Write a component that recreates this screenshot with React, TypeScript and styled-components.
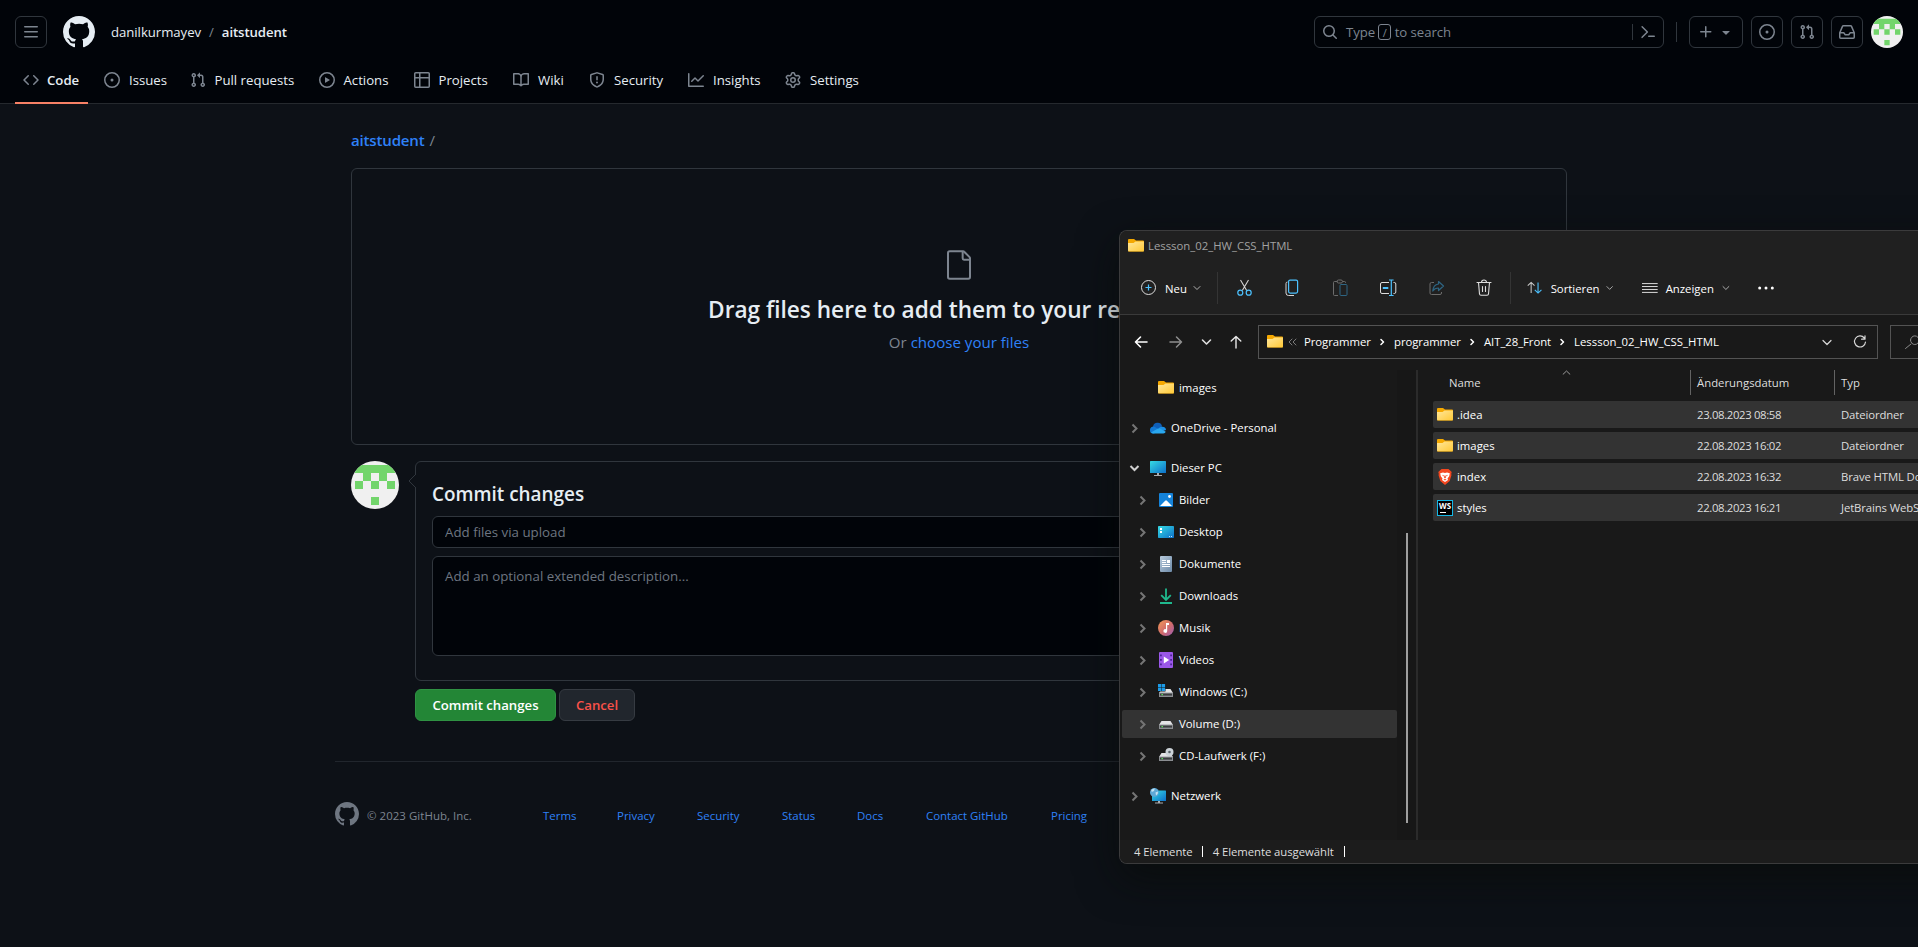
import React from 'react';
import styled, { createGlobalStyle, css } from 'styled-components';

const GlobalStyle = createGlobalStyle`
  * { box-sizing: border-box; }
  html, body { margin: 0; padding: 0; height: 100%; background: #0d1117; overflow: hidden; }
  body { font-family: "Open Sans", "Noto Sans", sans-serif; color: #e6edf3; }
  input, textarea, button { font-family: inherit; }
`;

/* ---------- GitHub icons (16px grid) ---------- */

const paths = {
  code: 'm11.28 3.22 4.25 4.25a.75.75 0 0 1 0 1.06l-4.25 4.25a.749.749 0 0 1-1.275-.326.749.749 0 0 1 .215-.734L13.94 8l-3.72-3.72a.749.749 0 0 1 .326-1.275.749.749 0 0 1 .734.215Zm-6.56 0a.751.751 0 0 1 1.042.018.751.751 0 0 1 .018 1.042L2.06 8l3.72 3.72a.749.749 0 0 1-.326 1.275.749.749 0 0 1-.734-.215L.47 8.53a.75.75 0 0 1 0-1.06Z',
  issue: 'M8 9.5a1.5 1.5 0 1 0 0-3 1.5 1.5 0 0 0 0 3ZM8 0a8 8 0 1 1 0 16A8 8 0 0 1 8 0ZM1.5 8a6.5 6.5 0 1 0 13 0 6.5 6.5 0 0 0-13 0Z',
  pull: 'M1.5 3.25a2.25 2.25 0 1 1 3 2.122v5.256a2.251 2.251 0 1 1-1.5 0V5.372A2.25 2.25 0 0 1 1.5 3.25Zm5.677-.177L9.573.677A.25.25 0 0 1 10 .854V2.5h1A2.5 2.5 0 0 1 13.5 5v5.628a2.251 2.251 0 1 1-1.5 0V5a1 1 0 0 0-1-1h-1v1.646a.25.25 0 0 1-.427.177L7.177 3.427a.25.25 0 0 1 0-.354ZM3.75 2.5a.75.75 0 1 0 0 1.5.75.75 0 0 0 0-1.5Zm0 9.5a.75.75 0 1 0 0 1.5.75.75 0 0 0 0-1.5Zm8.25.75a.75.75 0 1 0 1.5 0 .75.75 0 0 0-1.5 0Z',
  play: 'M8 0a8 8 0 1 1 0 16A8 8 0 0 1 8 0ZM1.5 8a6.5 6.5 0 1 0 13 0 6.5 6.5 0 0 0-13 0Zm4.879-2.773 4.264 2.559a.25.25 0 0 1 0 .428l-4.264 2.559A.25.25 0 0 1 6 10.559V5.442a.25.25 0 0 1 .379-.215Z',
  table: 'M0 1.75C0 .784.784 0 1.75 0h12.5C15.216 0 16 .784 16 1.75v12.5A1.75 1.75 0 0 1 14.25 16H1.75A1.75 1.75 0 0 1 0 14.25ZM6.5 6.5v8h7.75a.25.25 0 0 0 .25-.25V6.5Zm8-1.5V1.75a.25.25 0 0 0-.25-.25H6.5V5Zm-13 1.5v7.75c0 .138.112.25.25.25H5v-8ZM5 5V1.5H1.75a.25.25 0 0 0-.25.25V5Z',
  book: 'M0 1.75A.75.75 0 0 1 .75 1h4.253c1.227 0 2.317.59 3 1.501A3.743 3.743 0 0 1 11.006 1h4.245a.75.75 0 0 1 .75.75v10.5a.75.75 0 0 1-.75.75h-4.507a2.25 2.25 0 0 0-1.591.659l-.622.621a.75.75 0 0 1-1.06 0l-.622-.621A2.25 2.25 0 0 0 5.258 13H.75a.75.75 0 0 1-.75-.75Zm7.251 10.324.004-5.073-.002-2.253A2.25 2.25 0 0 0 5.003 2.5H1.5v9h3.757a3.75 3.75 0 0 1 1.994.574ZM8.755 4.75l-.004 7.322a3.752 3.752 0 0 1 1.992-.572H14.5v-9h-3.495a2.25 2.25 0 0 0-2.25 2.25Z',
  shield: 'M7.467.133a1.748 1.748 0 0 1 1.066 0l5.25 1.68A1.75 1.75 0 0 1 15 3.48V7c0 1.566-.32 3.182-1.303 4.682-.983 1.498-2.585 2.813-5.032 3.855a1.697 1.697 0 0 1-1.33 0c-2.447-1.042-4.049-2.357-5.032-3.855C1.32 10.182 1 8.566 1 7V3.48a1.75 1.75 0 0 1 1.217-1.667Zm.61 1.429a.25.25 0 0 0-.153 0l-5.25 1.68a.25.25 0 0 0-.174.238V7c0 1.358.275 2.666 1.057 3.86.784 1.194 2.121 2.34 4.366 3.297a.196.196 0 0 0 .154 0c2.245-.956 3.582-2.104 4.366-3.298C13.225 9.666 13.5 8.36 13.5 7V3.48a.251.251 0 0 0-.174-.237l-5.25-1.68ZM8.75 4.75v3a.75.75 0 0 1-1.5 0v-3a.75.75 0 0 1 1.5 0ZM9 10.5a1 1 0 1 1-2 0 1 1 0 0 1 2 0Z',
  graph: 'M1.5 1.75V13.5h13.75a.75.75 0 0 1 0 1.5H.75a.75.75 0 0 1-.75-.75V1.75a.75.75 0 0 1 1.5 0Zm14.28 2.53-5.25 5.25a.75.75 0 0 1-1.06 0L7 7.06 4.28 9.78a.751.751 0 0 1-1.042-.018.751.751 0 0 1-.018-1.042l3.25-3.25a.75.75 0 0 1 1.06 0L10 7.94l4.72-4.72a.751.751 0 0 1 1.042.018.751.751 0 0 1 .018 1.042Z',
  gear: 'M8 0a8.2 8.2 0 0 1 .701.031C9.444.095 9.99.645 10.16 1.29l.288 1.107c.018.066.079.158.212.224.231.114.454.243.668.386.123.082.233.09.299.071l1.103-.303c.644-.176 1.392.021 1.82.63.27.385.506.792.704 1.218.315.675.111 1.422-.364 1.891l-.814.806c-.049.048-.098.147-.088.294.016.257.016.515 0 .772-.01.147.038.246.088.294l.814.806c.475.469.679 1.216.364 1.891a7.977 7.977 0 0 1-.704 1.217c-.428.61-1.176.807-1.82.63l-1.102-.302c-.067-.019-.177-.011-.3.071a5.909 5.909 0 0 1-.668.386c-.133.066-.194.158-.211.224l-.29 1.106c-.168.646-.715 1.196-1.458 1.26a8.006 8.006 0 0 1-1.402 0c-.743-.064-1.289-.614-1.458-1.26l-.289-1.106c-.018-.066-.079-.158-.212-.224a5.738 5.738 0 0 1-.668-.386c-.123-.082-.233-.09-.299-.071l-1.103.303c-.644.176-1.392-.021-1.82-.63a8.12 8.12 0 0 1-.704-1.218c-.315-.675-.111-1.422.363-1.891l.815-.806c.05-.048.098-.147.088-.294a6.214 6.214 0 0 1 0-.772c.01-.147-.038-.246-.088-.294l-.815-.806C.635 6.045.431 5.298.746 4.623a7.92 7.92 0 0 1 .704-1.217c.428-.61 1.176-.807 1.82-.63l1.102.302c.067.019.177.011.3-.071.214-.143.437-.272.668-.386.133-.066.194-.158.211-.224l.29-1.106C6.009.645 6.556.095 7.299.03 7.53.01 7.764 0 8 0Zm-.571 1.525c-.036.003-.108.036-.137.146l-.289 1.105c-.147.561-.549.967-.998 1.189-.173.086-.34.183-.5.29-.417.278-.97.423-1.529.27l-1.103-.303c-.109-.03-.175.016-.195.045-.22.312-.412.644-.573.99-.014.031-.021.11.059.19l.815.806c.411.406.562.957.53 1.456a4.709 4.709 0 0 0 0 .582c.032.499-.119 1.05-.53 1.456l-.815.806c-.081.08-.073.159-.059.19.162.346.353.677.573.989.02.03.085.076.195.046l1.102-.303c.56-.153 1.113-.008 1.53.27.161.107.328.204.501.29.447.222.85.629.997 1.189l.289 1.105c.029.109.101.143.137.146a6.6 6.6 0 0 0 1.142 0c.036-.003.108-.036.137-.146l.289-1.105c.147-.561.549-.967.998-1.189.173-.086.34-.183.5-.29.417-.278.97-.423 1.529-.27l1.103.303c.109.029.175-.016.195-.045.22-.313.411-.644.573-.99.014-.031.021-.11-.059-.19l-.815-.806c-.411-.406-.562-.957-.53-1.456a4.709 4.709 0 0 0 0-.582c-.032-.499.119-1.05.53-1.456l.815-.806c.081-.08.073-.159.059-.19a6.464 6.464 0 0 0-.573-.989c-.02-.03-.085-.076-.195-.046l-1.102.303c-.56.153-1.113.008-1.53-.27a4.44 4.44 0 0 0-.501-.29c-.447-.222-.85-.629-.997-1.189l-.289-1.105c-.029-.11-.101-.143-.137-.146a6.6 6.6 0 0 0-1.142 0ZM11 8a3 3 0 1 1-6 0 3 3 0 0 1 6 0ZM9.5 8a1.5 1.5 0 1 0-3.001.001A1.5 1.5 0 0 0 9.5 8Z',
  mark: 'M8 0c4.42 0 8 3.58 8 8a8.013 8.013 0 0 1-5.45 7.59c-.4.08-.55-.17-.55-.38 0-.27.01-1.13.01-2.2 0-.75-.25-1.23-.54-1.48 1.78-.2 3.65-.88 3.65-3.95 0-.88-.31-1.59-.82-2.15.08-.2.36-1.02-.08-2.12 0 0-.67-.22-2.2.82-.64-.18-1.32-.27-2-.27-.68 0-1.36.09-2 .27-1.53-1.03-2.2-.82-2.2-.82-.44 1.1-.16 1.92-.08 2.12-.51.56-.82 1.28-.82 2.15 0 3.06 1.86 3.75 3.64 3.95-.23.2-.44.55-.51 1.07-.46.21-1.61.55-2.33-.66-.15-.24-.6-.83-1.23-.82-.67.01-.27.38.01.53.34.19.73.9.82 1.13.16.45.68 1.31 2.69.94 0 .67.01 1.3.01 1.49 0 .21-.15.45-.55.38A7.995 7.995 0 0 1 0 8c0-4.42 3.58-8 8-8Z',
  search: 'M10.68 11.74a6 6 0 0 1-7.922-8.982 6 6 0 0 1 8.982 7.922l3.04 3.04a.749.749 0 0 1-.326 1.275.749.749 0 0 1-.734-.215ZM11.5 7a4.499 4.499 0 1 0-8.997 0A4.499 4.499 0 0 0 11.5 7Z',
  command: 'm6.354 8.04-4.773 4.773a.75.75 0 1 0 1.061 1.06L7.945 8.57a.75.75 0 0 0 0-1.06L2.642 2.206a.75.75 0 0 0-1.06 1.061L6.353 8.04ZM8.75 11.5a.75.75 0 0 0 0 1.5h5.5a.75.75 0 0 0 0-1.5h-5.5Z',
  plus: 'M7.75 2a.75.75 0 0 1 .75.75V7h4.25a.75.75 0 0 1 0 1.5H8.5v4.25a.75.75 0 0 1-1.5 0V8.5H2.75a.75.75 0 0 1 0-1.5H7V2.75A.75.75 0 0 1 7.75 2Z',
  triangle: 'm4.427 7.427 3.396 3.396a.25.25 0 0 0 .354 0l3.396-3.396A.25.25 0 0 0 11.396 7H4.604a.25.25 0 0 0-.177.427Z',
  inbox: 'M2.8 2.06A1.75 1.75 0 0 1 4.41 1h7.18c.7 0 1.333.417 1.61 1.06l2.74 6.395c.04.093.06.194.06.295v4.5A1.75 1.75 0 0 1 14.25 15H1.75A1.75 1.75 0 0 1 0 13.25v-4.5c0-.101.02-.202.06-.295Zm1.61.44a.25.25 0 0 0-.23.152L1.887 8H4.75a.75.75 0 0 1 .6.3L6.625 10h2.75l1.275-1.7a.75.75 0 0 1 .6-.3h2.863L11.82 2.652a.25.25 0 0 0-.23-.152Zm10.09 7h-2.875l-1.275 1.7a.75.75 0 0 1-.6.3h-3.5a.75.75 0 0 1-.6-.3L4.375 9.5H1.5v3.75c0 .138.112.25.25.25h12.5a.25.25 0 0 0 .25-.25Z',
  bars: 'M1 2.75A.75.75 0 0 1 1.75 2h12.5a.75.75 0 0 1 0 1.5H1.75A.75.75 0 0 1 1 2.75Zm0 5A.75.75 0 0 1 1.75 7h12.5a.75.75 0 0 1 0 1.5H1.75A.75.75 0 0 1 1 7.75ZM1.75 12h12.5a.75.75 0 0 1 0 1.5H1.75a.75.75 0 0 1 0-1.5Z',
};
type IconName = keyof typeof paths;

const Svg = styled.svg<{ $size?: number }>`
  display: block;
  flex: none;
  width: ${(p) => p.$size ?? 16}px;
  height: ${(p) => p.$size ?? 16}px;
`;

const Octicon = ({ name, size = 16, color = '#7d8590' }: { name: IconName; size?: number; color?: string }) => (
  <Svg $size={size} viewBox="0 0 16 16" fill={color}>
    <path fillRule={name === 'mark' ? 'nonzero' : 'evenodd'} d={paths[name]} />
  </Svg>
);

/* ---------- Page header ---------- */

const Page = styled.div`
  position: relative;
  width: 100%;
  height: 947px;
  overflow: hidden;
  background: #0d1117;
`;

const Header = styled.header`
  display: flex;
  flex-direction: column;
  height: 104px;
  background: #010409;
  border-bottom: 1px solid #25292e;
`;

const TopBar = styled.div`
  display: flex;
  flex: none;
  align-items: center;
  height: 64px;
  padding: 0 15px;
`;

const SquareButton = styled.button<{ $width?: number }>`
  display: flex;
  align-items: center;
  justify-content: center;
  gap: 4px;
  width: ${(p) => p.$width ?? 32}px;
  height: 32px;
  padding: 0;
  background: transparent;
  border: 1px solid #30363d;
  border-radius: 6px;
`;

const LogoLink = styled.a`
  margin: 0 16px;
`;

const Crumbs = styled.div`
  display: flex;
  align-items: center;
  flex: 1;
  font-size: 13.2px;
  line-height: 20px;
  letter-spacing: -0.05px;
`;

const CrumbSlash = styled.span`
  margin: 0 8px;
  color: #7d8590;
`;

const CrumbStrong = styled.span`
  font-weight: 600;
  letter-spacing: -0.1px;
`;

const SearchBox = styled.div`
  display: flex;
  align-items: center;
  width: 350px;
  height: 32px;
  padding: 0 7px;
  border: 1px solid #30363d;
  border-radius: 6px;
  color: #7d8590;
  font-size: 13.2px;
`;

const SearchLabel = styled.div`
  display: flex;
  align-items: center;
  flex: 1;
  margin-left: 8px;
  letter-spacing: -0.05px;
`;

const SlashKey = styled.span`
  display: flex;
  align-items: center;
  justify-content: center;
  width: 13px;
  height: 16px;
  margin: 0 3.5px 0 3px;
  border: 1px solid #7d8590;
  border-radius: 3px;
  font-size: 11px;
`;

const Rule = styled.div<{ $h: number; $margin: string }>`
  width: 1px;
  height: ${(p) => p.$h}px;
  margin: ${(p) => p.$margin};
  background: #30363d;
`;

const Actions = styled.div`
  display: flex;
  gap: 8px;
`;

const RepoNav = styled.nav`
  display: flex;
  flex: none;
  gap: 8px;
  height: 40px;
  padding-left: 15px;
`;

const NavItem = styled.a<{ $active?: boolean }>`
  display: flex;
  gap: ${(p) => (p.$active ? 8 : 9)}px;
  height: 40px;
  padding: 8px 8px 0;
  font-size: 13.2px;
  line-height: 17px;
  border-bottom: 2px solid transparent;
  ${(p) => p.$active && css`
    border-bottom-color: #f78166;
    font-weight: 600;
  `}
`;

const NavLabel = styled.span<{ $w: number }>`
  width: ${(p) => p.$w}px;
  white-space: nowrap;
`;

const navItems: { icon: IconName; label: string; w: number }[] = [
  { icon: 'code', label: 'Code', w: 33 },
  { icon: 'issue', label: 'Issues', w: 36.5 },
  { icon: 'pull', label: 'Pull requests', w: 80 },
  { icon: 'play', label: 'Actions', w: 46 },
  { icon: 'table', label: 'Projects', w: 50.5 },
  { icon: 'book', label: 'Wiki', w: 27 },
  { icon: 'shield', label: 'Security', w: 50 },
  { icon: 'graph', label: 'Insights', w: 48 },
  { icon: 'gear', label: 'Settings', w: 50 },
];

const Identicon = ({ size }: { size: number }) => (
  <Svg $size={size} viewBox="0 0 48 48">
    <defs>
      <clipPath id={`round${size}`}><circle cx="24" cy="24" r="24" /></clipPath>
    </defs>
    <g clipPath={`url(#round${size})`}>
      <rect width="48" height="48" fill="#f0f0f0" />
      <path fill="#72d56b" d="M4 4h40v8H4zM12 12h8v8h-8zM28 12h8v8h-8zM4 20h8v8H4zM20 20h8v8h-8zM36 20h8v8h-8zM20 36h8v8h-8z" />
    </g>
  </Svg>
);

/* ---------- Upload page ---------- */

const Main = styled.main`
  width: 1216px;
  margin-left: 351px;
  padding-top: 24px;
`;

const PathLine = styled.div`
  height: 24px;
  font-size: 15.1px;
  line-height: 24px;
  color: #7d8590;
`;

const PathLink = styled.a`
  color: #2f81f7;
  font-weight: 600;
  letter-spacing: -0.2px;
  margin-right: 5px;
`;

const DropZone = styled.section`
  display: flex;
  flex-direction: column;
  align-items: center;
  height: 277px;
  margin-top: 16px;
  padding-top: 80px;
  border: 1px solid #30363d;
  border-radius: 6px;
`;

const DropTitle = styled.h1`
  margin: 11px 0 2px;
  font-size: 22.65px;
  font-weight: 600;
  line-height: 36px;
`;

const DropHint = styled.div`
  font-size: 15.1px;
  line-height: 24px;
  color: #7d8590;
`;

const HintLink = styled.a`
  color: #2f81f7;
`;

const CommitRow = styled.section`
  display: flex;
  gap: 16px;
  margin-top: 16px;
`;

const CommitColumn = styled.div`
  flex: 1;
`;

const CommitBox = styled.div`
  position: relative;
  display: flex;
  flex-direction: column;
  height: 220px;
  padding: 16px;
  border: 1px solid #30363d;
  border-radius: 6px;
`;

const Caret = styled.svg`
  position: absolute;
  left: -8px;
  top: 11px;
  width: 8px;
  height: 16px;
`;

const CommitTitle = styled.h2`
  margin: 0 0 6px;
  font-size: 18.9px;
  font-weight: 600;
  line-height: 32px;
`;

const fieldStyle = css`
  display: block;
  width: 100%;
  padding: 9px 12px 7px;
  background: #010409;
  border: 1px solid #30363d;
  border-radius: 6px;
  outline: none;
  resize: none;
  color: #e6edf3;
  font-size: 13.3px;
  &::placeholder { color: #6e7681; opacity: 1; }
`;

const TextField = styled.input`
  ${fieldStyle}
  height: 32px;
  padding: 0 12px;
`;

const TextArea = styled.textarea`
  ${fieldStyle}
  height: 100px;
  margin-top: 8px;
  line-height: 21px;
`;

const ButtonRow = styled.div`
  display: flex;
  gap: 3px;
  margin-top: 8px;
`;

const Button = styled.button<{ $primary?: boolean }>`
  width: ${(p) => (p.$primary ? 141 : 76)}px;
  height: 32px;
  padding: 0;
  border: 1px solid ${(p) => (p.$primary ? '#2f9243' : '#363b42')};
  border-radius: 6px;
  background: ${(p) => (p.$primary ? '#238636' : '#21262d')};
  color: ${(p) => (p.$primary ? '#ffffff' : '#f85149')};
  font-size: 13.2px;
  font-weight: 600;
`;

const Footer = styled.footer`
  display: flex;
  width: 1248px;
  margin: 40px 0 0 -16px;
  padding-top: 40px;
  border-top: 1px solid #21262d;
  font-size: 11.45px;
  line-height: 18px;
`;

const Copyright = styled.span`
  width: 176px;
  margin-left: 8px;
  padding-top: 5px;
  color: #7d8590;
  letter-spacing: 0.05px;
`;

const FooterLink = styled.a<{ $w: number }>`
  width: ${(p) => p.$w}px;
  padding-top: 5px;
  color: #2f81f7;
  white-space: nowrap;
`;

const footerLinks: [string, number][] = [
  ['Terms', 74], ['Privacy', 80], ['Security', 85], ['Status', 75], ['Docs', 69], ['Contact GitHub', 125], ['Pricing', 60],
];

/* ---------- Explorer window ---------- */

const Window = styled.div`
  position: absolute;
  left: 1119px;
  top: 230px;
  right: 0;
  height: 634px;
  display: flex;
  flex-direction: column;
  border: 1px solid #3b3b3c;
  border-right: none;
  border-radius: 8px 0 0 8px;
  background: #191919;
  overflow: hidden;
  color: #ffffff;
  font-size: 11.35px;
  white-space: nowrap;
`;

const WindowShadow = styled.div`
  position: absolute;
  left: 1119px;
  top: 230px;
  right: -60px;
  height: 634px;
  border-radius: 8px;
  box-shadow: 0 14px 40px rgba(8, 10, 8, 0.65);
`;

const TitleRow = styled.div`
  display: flex;
  align-items: center;
  gap: 4px;
  height: 31px;
  padding: 0 0 2px 8px;
  background: #202020;
  color: #a2a2a2;
`;

const ToolRow = styled.div`
  display: flex;
  align-items: center;
  height: 53px;
  background: #202020;
  border-bottom: 1px solid #3a3a3a;
`;

const Tool = styled.div<{ $ml: number; $w: number }>`
  display: flex;
  align-items: center;
  flex: none;
  width: ${(p) => p.$w}px;
  height: 24px;
  margin-left: ${(p) => p.$ml}px;
`;

const ToolDivider = styled.div<{ $ml: number }>`
  flex: none;
  width: 1px;
  height: 32px;
  margin-left: ${(p) => p.$ml}px;
  background: #343434;
`;

const ToolText = styled.span<{ $ml: number; $w: number }>`
  flex: none;
  width: ${(p) => p.$w}px;
  margin-left: ${(p) => p.$ml}px;
  font-weight: 500;
`;

const AddressRow = styled.div`
  display: flex;
  align-items: center;
  height: 55px;
  padding-bottom: 1px;
`;

const AddressBox = styled.div`
  display: flex;
  flex: none;
  align-items: center;
  width: 620px;
  height: 34px;
  margin-left: 16px;
  padding-left: 8px;
  border: 1px solid #535353;
  font-weight: 500;
`;

const Segment = styled.span<{ $w: number; $loose?: boolean }>`
  flex: none;
  width: ${(p) => p.$w}px;
  margin-top: -1px;
  letter-spacing: ${(p) => (p.$loose ? 0.03 : -0.06)}px;
`;

const WindowSearch = styled.div`
  display: flex;
  align-items: center;
  flex: 1;
  min-width: 0;
  height: 34px;
  margin-left: 12px;
  padding-left: 13px;
  border: 1px solid #535353;
  border-right: none;
  overflow: hidden;
`;

const Body = styled.div`
  display: flex;
  flex: 1;
  min-height: 0;
`;

const Tree = styled.div`
  width: 277px;
  padding: 2px 0 0 2px;
`;

const TreeRow = styled.div<{ $level: number; $selected?: boolean; $space?: boolean }>`
  display: flex;
  align-items: center;
  height: 28px;
  margin: ${(p) => (p.$space ? 12 : 4)}px 0 0;
  padding-left: ${(p) => (p.$level === 1 ? 4 : 12)}px;
  border-radius: 2px;
  background: ${(p) => (p.$selected ? '#333333' : 'transparent')};
  &:first-child { margin-top: 2px; }
`;

const TreeIcon = styled.span`
  width: 16px;
  height: 16px;
  margin: 0 5px 0 8px;
`;

const TreeLabel = styled.span`
  margin-top: -2px;
`;

const ScrollTrack = styled.div`
  width: 19px;
  padding: 163px 0 0 9px;
  background: #171717;
`;

const ScrollThumb = styled.div`
  width: 2px;
  height: 290px;
  background: #9f9f9f;
`;

const PaneDivider = styled.div`
  width: 2px;
  background: #2b2b2b;
`;

const FilePane = styled.div`
  flex: 1;
  min-width: 0;
  color: #dedede;
`;

const ColumnHead = styled.div`
  position: relative;
  display: flex;
  height: 31px;
`;

const HeadCell = styled.div<{ $w: number; $pl: number; $line?: boolean }>`
  flex: none;
  width: ${(p) => p.$w}px;
  height: 25px;
  padding-left: ${(p) => p.$pl}px;
  border-left: ${(p) => (p.$line ? '1px solid #636363' : 'none')};
  line-height: 25px;
`;

const SortMark = styled.svg`
  position: absolute;
  left: 144px;
  top: 0;
  width: 9px;
  height: 5px;
`;

const FileRow = styled.div`
  display: flex;
  align-items: center;
  height: 27px;
  margin: 0 0 4px 15px;
  padding-left: 4px;
  background: #333333;
  border-radius: 2px 0 0 2px;
  overflow: hidden;
`;

const FileName = styled.span`
  flex: none;
  width: 240px;
  margin-left: 4px;
  color: #ffffff;
`;

const FileDate = styled.span`
  flex: none;
  width: 144px;
  letter-spacing: -0.35px;
`;

const FileType = styled.span`
  letter-spacing: -0.12px;
`;

const StatusBar = styled.div`
  display: flex;
  align-items: center;
  height: 23px;
  padding: 0 0 0 14px;
  background: #1c1c1c;
  color: #dedede;
  letter-spacing: -0.06px;
`;

const StatusTick = styled.span<{ $margin: string }>`
  width: 1px;
  height: 11px;
  margin: ${(p) => p.$margin};
  background: #ffffff;
`;

/* Explorer icons */

const Stroke = ({ d, w = 16, h = 16, color = '#dddddd', sw = 1 }: { d: string; w?: number; h?: number; color?: string; sw?: number }) => (
  <svg width={w} height={h} viewBox={`0 0 ${w} ${h}`} fill="none" stroke={color} strokeWidth={sw} strokeLinecap="round" strokeLinejoin="round">
    <path d={d} />
  </svg>
);

const ChevronSmall = () => <Stroke w={8} h={6} d="M1 1.5l3 3 3-3" color="#b0b0b0" />;

const Folder = () => (
  <Svg viewBox="0 0 16 16">
    <defs>
      <linearGradient id="folderFront" x1="0" y1="0" x2="1" y2="1">
        <stop offset="0" stopColor="#ffe79b" />
        <stop offset="1" stopColor="#ffc937" />
      </linearGradient>
    </defs>
    <path fill="#f5a800" d="M0 2a1 1 0 0 1 1-1h5l2 1.5h7a1 1 0 0 1 1 1V12H0z" />
    <path fill="url(#folderFront)" d="M0 5h5.5l2-1.5H16v9a.8.8 0 0 1-.8.8H.8a.8.8 0 0 1-.8-.8z" />
    <path fill="#d9a323" d="M.3 13h15.4v.7H.3z" />
  </Svg>
);

const screenFill = (id: string) => (
  <defs>
    <linearGradient id={id} x1="0" y1="0" x2="1" y2="1">
      <stop offset="0" stopColor="#36dbe4" />
      <stop offset="1" stopColor="#0d6fc9" />
    </linearGradient>
  </defs>
);

const Drive = ({ children }: { children?: React.ReactNode }) => (
  <Svg viewBox="0 0 16 16">
    <path fill="#e3e3e6" d="M3.5 5h9L15 9H1z" />
    <path fill="#8a8d91" d="M1 8.6h14v4.4H1z" />
    <path fill="#3b3d40" d="M2 9.6h12v2H2z" />
    <rect x="3.5" y="10" width="1.4" height="1.2" fill="#5df05d" />
    {children}
  </Svg>
);

const treeIcons = {
  folder: <Folder />,
  cloud: (
    <Svg viewBox="0 0 16 16">
      <path fill="#0f5fb8" d="M3 7.5A4.6 4.6 0 0 1 12 6l-2 5-7-2z" />
      <path fill="#1279d4" d="M0 10.5a3.5 3.5 0 0 1 4.5-3.8l5 3-5.5 3.8H3a3 3 0 0 1-3-3z" />
      <path fill="#1b8fe4" d="M8.5 8.6A4 4 0 0 1 12.2 6.7 3.4 3.4 0 0 1 16 10l-3 1z" />
      <path fill="#29a7ee" d="M1 12.4l6.5-3.7 2-.5 6.3 3.6A2.6 2.6 0 0 1 13.3 13.5H3.4A3.3 3.3 0 0 1 1 12.4z" />
    </Svg>
  ),
  pc: (
    <Svg viewBox="0 0 16 16">
      {screenFill('pcScreen')}
      <rect y="1" width="16" height="12" rx=".6" fill="url(#pcScreen)" />
      <path fill="#a9adb1" d="M7 13h2v2h3v1H4v-1h3z" />
    </Svg>
  ),
  pictures: (
    <Svg viewBox="0 0 16 16">
      <rect x="1" y="1" width="14" height="14" rx="1" fill="#1583da" />
      <path fill="#ffffff" d="M2 14l5.2-5.2a1.2 1.2 0 0 1 1.7 0L14 14z" />
      <circle cx="11.5" cy="4.5" r="1.4" fill="#ffffff" />
    </Svg>
  ),
  desktop: (
    <Svg viewBox="0 0 16 16">
      {screenFill('deskScreen')}
      <rect y="2" width="16" height="12" rx=".8" fill="url(#deskScreen)" />
      <path fill="#ffffff" d="M2 4h2v2H2zM2 7h2v2H2z" />
      <path fill="#b9e5ff" d="M11 12h1v1h-1zM13 12h1v1h-1z" />
    </Svg>
  ),
  documents: (
    <Svg viewBox="0 0 16 16">
      <defs>
        <linearGradient id="docFill" x1="0" y1="0" x2="1" y2="1">
          <stop offset="0" stopColor="#b9cbdc" />
          <stop offset="1" stopColor="#6d8aa8" />
        </linearGradient>
      </defs>
      <rect x="2" y="0" width="12" height="16" rx="1" fill="url(#docFill)" />
      <path fill="#ffffff" d="M4 4h4v1H4zM4 6h4v1H4zM9 4h3v3H9zM4 8h8v1H4zM4 10h8v1H4z" />
    </Svg>
  ),
  downloads: (
    <Svg viewBox="0 0 16 16" fill="none" stroke="#1fb88d" strokeWidth="1.8">
      <path d="M8 .5v11M3.2 7.2L8 12l4.8-4.8M2 15h12" />
    </Svg>
  ),
  music: (
    <Svg viewBox="0 0 16 16">
      <defs>
        <linearGradient id="musicFill" x1="0" y1="0" x2="1" y2="1">
          <stop offset="0" stopColor="#f49a56" />
          <stop offset=".55" stopColor="#cf6a6c" />
          <stop offset="1" stopColor="#9c5fb8" />
        </linearGradient>
      </defs>
      <circle cx="8" cy="8" r="8" fill="url(#musicFill)" />
      <path fill="#ffffff" d="M8 3h3v2H9.2v6A1.9 1.9 0 1 1 8 9.2z" />
    </Svg>
  ),
  videos: (
    <Svg viewBox="0 0 16 16">
      <rect x="1" y="0" width="14" height="16" rx="1" fill="#9a57e8" />
      <path fill="#4d2596" d="M2 2.5h1.8v1.8H2zM2 7h1.8v1.8H2zM2 11.5h1.8v1.8H2zM12.2 2.5H14v1.8h-1.8zM12.2 7H14v1.8h-1.8zM12.2 11.5H14v1.8h-1.8z" />
      <path fill="#ffffff" d="M5.8 4.5l5.4 3.5-5.4 3.5z" />
    </Svg>
  ),
  windows: (
    <Drive>
      <path fill="#191919" d="M0 0h7.5v7.5H0z" />
      <path fill="#1b9be8" d="M0 0h3.3v3.3H0zM3.8 0h3.3v3.3H3.8zM0 3.8h3.3v3.3H0zM3.8 3.8h3.3v3.3H3.8z" />
    </Drive>
  ),
  drive: <Drive />,
  disc: (
    <Drive>
      <circle cx="11.5" cy="4" r="4" fill="#ccd3d8" />
      <circle cx="11.5" cy="4" r="1.3" fill="#59636b" />
    </Drive>
  ),
  network: (
    <Svg viewBox="0 0 16 16">
      {screenFill('netScreen')}
      <rect x="2" y="2.5" width="14" height="10.5" rx=".6" fill="url(#netScreen)" />
      <path fill="#a9adb1" d="M8 13h2v1.5h3v1H5v-1h3z" />
      <circle cx="4.4" cy="4.4" r="4.4" fill="#5fa9d6" />
      <path fill="#c3e4f4" d="M1.2 2A4.3 4.3 0 0 1 4.8.4L4 3 1.8 4zM5.5 4.5l2.5-1a4 4 0 0 1-2 4z" />
    </Svg>
  ),
};

type TreeEntry = { icon: keyof typeof treeIcons; label: string; level: number; space?: boolean; open?: boolean; leaf?: boolean; selected?: boolean };

const tree: TreeEntry[] = [
  { icon: 'folder', label: 'images', level: 2, leaf: true },
  { icon: 'cloud', label: 'OneDrive - Personal', level: 1, space: true },
  { icon: 'pc', label: 'Dieser PC', level: 1, space: true, open: true },
  { icon: 'pictures', label: 'Bilder', level: 2 },
  { icon: 'desktop', label: 'Desktop', level: 2 },
  { icon: 'documents', label: 'Dokumente', level: 2 },
  { icon: 'downloads', label: 'Downloads', level: 2 },
  { icon: 'music', label: 'Musik', level: 2 },
  { icon: 'videos', label: 'Videos', level: 2 },
  { icon: 'windows', label: 'Windows (C:)', level: 2 },
  { icon: 'drive', label: 'Volume (D:)', level: 2, selected: true },
  { icon: 'disc', label: 'CD-Laufwerk (F:)', level: 2 },
  { icon: 'network', label: 'Netzwerk', level: 1, space: true },
];

const TreeChevron = ({ open, leaf }: { open?: boolean; leaf?: boolean }) => (
  <svg width="16" height="16" viewBox="0 0 16 16" fill="none" stroke={open ? '#d0d0d0' : '#757575'} strokeWidth="2">
    {!leaf && <path d={open ? 'M4.5 6l4 4 4-4' : 'M6.5 4.5l4 4-4 4'} />}
  </svg>
);

const BraveIcon = () => (
  <Svg viewBox="0 0 16 16">
    <path fill="#f4471f" d="M4.5 0h7l1.6 1.6L14.7 3l-.5 2 .3 1-1.8 6L8 16l-4.7-4-1.8-6 .3-1-.5-2 1.6-1.4z" />
    <path fill="#ffffff" d="M3.2 4.2L6 3.4l2 .5 2-.5 2.8.8-.6 3-1.7 2.3.5 1.4L8 13l-3-2.1.5-1.4-1.7-2.3z" />
    <path fill="#f4471f" d="M5 5.8l2 .7-.6.9zM11 5.8l-2 .7.6.9zM7.4 6.5h1.2l.3 2.3-.9.7-.9-.7zM6.4 10.4L8 9.9l1.6.5L8 11.6z" />
  </Svg>
);

const WebStormIcon = () => (
  <Svg viewBox="0 0 16 16">
    <rect x=".5" y=".5" width="15" height="15" fill="#000000" stroke="#14b8e6" />
    <text x="2" y="8.8" fontFamily="Open Sans, sans-serif" fontWeight="700" fontSize="8" fill="#ffffff" textLength="12" lengthAdjust="spacingAndGlyphs">WS</text>
    <rect x="3" y="12" width="6" height="1" fill="#ffffff" />
  </Svg>
);

const files = [
  { icon: <Folder />, name: '.idea', date: '23.08.2023 08:58', type: 'Dateiordner' },
  { icon: <Folder />, name: 'images', date: '22.08.2023 16:02', type: 'Dateiordner' },
  { icon: <BraveIcon />, name: 'index', date: '22.08.2023 16:32', type: 'Brave HTML Document' },
  { icon: <WebStormIcon />, name: 'styles', date: '22.08.2023 16:21', type: 'JetBrains WebStorm' },
];

const blue = '#4cc2ff';

const Separator = () => (
  <Tool $ml={0} $w={14}><Stroke w={5} h={8} d="M1 1.5L3.500 4 1 6.500" sw={1.5} color="#ffffff" /></Tool>
);

const ExplorerWindow = () => (
  <Window>
    <TitleRow>
      <Folder />
      <span>Lessson_02_HW_CSS_HTML</span>
    </TitleRow>
    <ToolRow>
      <Tool $ml={21} $w={60}>
        <svg width="16" height="16" viewBox="0 0 16 16" fill="none" stroke="#dddddd">
          <circle cx="7.5" cy="7.5" r="7" />
          <path d="M7.5 4.5v6M4.5 7.5h6" stroke={blue} strokeWidth="1.2" />
        </svg>
        <ToolText $ml={8} $w={28}>Neu</ToolText>
        <ChevronSmall />
      </Tool>
      <ToolDivider $ml={16} />
      <Tool $ml={19} $w={16}>
        <svg width="16" height="18" viewBox="0 0 16 18" fill="none" stroke="#d5d5d5" strokeWidth="1.1">
          <path d="M3.5 1l6.2 10.5M11.5 1L5.3 11.5" />
          <g stroke={blue} strokeWidth="1.2"><circle cx="3.3" cy="13.7" r="2.5" /><circle cx="11.7" cy="13.7" r="2.5" /></g>
        </svg>
      </Tool>
      <Tool $ml={32} $w={16}>
        <svg width="14" height="18" viewBox="0 0 14 18" fill="none">
          <path d="M2.5 3A1.5 1.5 0 0 0 1 4.5V14a2.5 2.5 0 0 0 2.5 2.5H9" stroke="#d5d5d5" />
          <rect x="3.6" y="1.1" width="9" height="13" rx="1.5" stroke={blue} strokeWidth="1.2" />
        </svg>
      </Tool>
      <Tool $ml={32} $w={16}>
        <svg width="16" height="18" viewBox="0 0 16 18" fill="none" stroke="#6c6c6c">
          <path d="M4.5 2.5h-3a1 1 0 0 0-1 1v12a1 1 0 0 0 1 1H5M9.5 2.5h2a1 1 0 0 1 1 1V4" />
          <rect x="4" y="1" width="5.5" height="3" rx="1.5" />
          <rect x="7" y="5.5" width="7" height="11" rx="1" stroke="#2e6583" />
        </svg>
      </Tool>
      <Tool $ml={31} $w={17}>
        <svg width="17" height="18" viewBox="0 0 17 18" fill="none" stroke="#dddddd">
          <path d="M9 3.500H2A1.500 1.500 0 0 0 .5 5v8A1.500 1.500 0 0 0 2 14.500h7M13.500 3.500h.8A1.500 1.500 0 0 1 15.800 5v8a1.500 1.500 0 0 1-1.500 1.500h-.8" />
          <path d="M2.8 9h5.5" stroke={blue} strokeWidth="2" />
          <path d="M11.3 1v15.5M9 1h4.6M9 16.5h4.6" stroke={blue} strokeWidth="1.2" />
        </svg>
      </Tool>
      <Tool $ml={32} $w={16}>
        <svg width="16" height="16" viewBox="0 0 16 16" fill="none" stroke="#6c6c6c">
          <path d="M5 2.500H2.500A1.500 1.500 0 0 0 1 4v9a1.500 1.500 0 0 0 1.500 1.500h8.500a1.500 1.500 0 0 0 1.500-1.500v-1" />
          <path d="M9.5 1.5L14.500 6l-5 4.500V8C6.500 8 5 9 3.800 11c.2-4 2.500-6.500 5.700-7z" stroke="#2e6583" strokeWidth="1.2" strokeLinejoin="round" />
        </svg>
      </Tool>
      <Tool $ml={31} $w={16}>
        <svg width="16" height="18" viewBox="0 0 16 18" fill="none" stroke="#dddddd" strokeWidth="1.1" strokeLinecap="round">
          <path d="M1 3.500h14M5.500 3.500a2.500 2.500 0 0 1 5 0M2.500 3.500l1 11.500a1.500 1.500 0 0 0 1.500 1.300h6a1.500 1.500 0 0 0 1.500-1.300l1-11.500M6.500 7.500v5M9.500 7.500v5" />
        </svg>
      </Tool>
      <ToolDivider $ml={18} />
      <Tool $ml={16} $w={86}>
        <svg width="17" height="16" viewBox="0 0 17 16" fill="none" stroke="#cccccc" strokeWidth="1.1">
          <path d="M4.500 13.500V2M.8 5.500L4.500 2l3.700 3.500" />
          <path d="M12 2v11.500M8.500 10l3.500 3.500 3.700-3.500" stroke={blue} strokeWidth="1.2" />
        </svg>
        <ToolText $ml={8} $w={55}>Sortieren</ToolText>
        <ChevronSmall />
      </Tool>
      <Tool $ml={29} $w={88}>
        <svg width="16" height="12" viewBox="0 0 16 12" stroke="#dddddd">
          <path d="M0 1.500h16M0 4.500h16M0 7.500h16M0 10.500h16" />
        </svg>
        <ToolText $ml={8} $w={56.5}>Anzeigen</ToolText>
        <ChevronSmall />
      </Tool>
      <Tool $ml={28} $w={16}>
        <svg width="16" height="4" viewBox="0 0 16 4" fill="#ffffff">
          <circle cx="1.7" cy="2" r="1.5" /><circle cx="8" cy="2" r="1.5" /><circle cx="14.3" cy="2" r="1.5" />
        </svg>
      </Tool>
    </ToolRow>
    <AddressRow>
      <Tool $ml={14} $w={16}><Stroke w={14} d="M13 8H1.500M6.500 3L1.500 8l5 5" sw={1.6} color="#ffffff" /></Tool>
      <Tool $ml={19} $w={16}><Stroke w={14} d="M1 8h11.500M7.500 3l5 5-5 5" sw={1.5} color="#8e8e8e" /></Tool>
      <Tool $ml={16} $w={12}><Stroke w={11} h={8} d="M1.500 2l4 4 4-4" sw={1.6} color="#e0e0e0" /></Tool>
      <Tool $ml={17} $w={12}><Stroke w={12} h={14} d="M6 13V1.500M1.200 6L6 1.500 10.800 6" sw={1.4} color="#e8e8e8" /></Tool>
      <AddressBox>
        <Folder />
        <Tool $ml={5} $w={16}><Stroke w={9} h={8} d="M4 1L1 4l3 3M8 1L5 4l3 3" color="#7a7a7a" /></Tool>
        <Segment $w={76}>Programmer</Segment>
        <Separator />
        <Segment $w={76}>programmer</Segment>
        <Separator />
        <Segment $w={76}>AIT_28_Front</Segment>
        <Separator />
        <Segment $w={248} $loose>Lessson_02_HW_CSS_HTML</Segment>
        <Tool $ml={0} $w={31}><Stroke w={10} h={7} d="M1 1.500l4 4 4-4" sw={1.2} color="#d8d8d8" /></Tool>
        <Tool $ml={0} $w={14}><Stroke w={14} h={14} d="M11.300 3A5.500 5.500 0 1 0 12.500 7M12 .8v3.400H8.600" sw={1.2} color="#d8d8d8" /></Tool>
      </AddressBox>
      <WindowSearch><Svg viewBox="0 0 16 16" fill="none" stroke="#8a8a8a" strokeLinecap="round"><path d="M7 10L1.500 14.500M6.500 6.200a4.300 4.300 0 1 0 8.600 0 4.300 4.300 0 1 0-8.600 0" /></Svg></WindowSearch>
    </AddressRow>
    <Body>
      <Tree>
        {tree.map((t) => (
          <TreeRow key={t.label} $level={t.level} $space={t.space} $selected={t.selected}>
            <TreeChevron open={t.open} leaf={t.leaf} />
            <TreeIcon>{treeIcons[t.icon]}</TreeIcon>
            <TreeLabel>{t.label}</TreeLabel>
          </TreeRow>
        ))}
      </Tree>
      <ScrollTrack><ScrollThumb /></ScrollTrack>
      <PaneDivider />
      <FilePane>
        <ColumnHead>
          <HeadCell $w={272} $pl={31}>Name</HeadCell>
          <HeadCell $w={144} $pl={6} $line>Änderungsdatum</HeadCell>
          <HeadCell $w={90} $pl={6} $line>Typ</HeadCell>
          <SortMark viewBox="0 0 9 5" fill="none" stroke="#9a9a9a"><path d="M.8 4.500L4.500 1l3.700 3.500" /></SortMark>
        </ColumnHead>
        {files.map((f) => (
          <FileRow key={f.name}>
            {f.icon}
            <FileName>{f.name}</FileName>
            <FileDate>{f.date}</FileDate>
            <FileType>{f.type}</FileType>
          </FileRow>
        ))}
      </FilePane>
    </Body>
    <StatusBar>
      <span>4 Elemente</span>
      <StatusTick $margin="0 10px 0 9px" />
      <span>4 Elemente ausgewählt</span>
      <StatusTick $margin="0 0 0 10px" />
    </StatusBar>
  </Window>
);

export default function App() {
  return (
    <Page>
      <GlobalStyle />
      <Header>
        <TopBar>
          <SquareButton><Octicon name="bars" /></SquareButton>
          <LogoLink><Octicon name="mark" size={32} color="#e6edf3" /></LogoLink>
          <Crumbs>
            <span>danilkurmayev</span>
            <CrumbSlash>/</CrumbSlash>
            <CrumbStrong>aitstudent</CrumbStrong>
          </Crumbs>
          <SearchBox>
            <Octicon name="search" />
            <SearchLabel>Type <SlashKey>/</SlashKey> to search</SearchLabel>
            <Rule $h={16} $margin="0 7px 0 0" />
            <Octicon name="command" />
          </SearchBox>
          <Rule $h={20} $margin="0 12px" />
          <Actions>
            <SquareButton $width={54}><Octicon name="plus" /><Octicon name="triangle" /></SquareButton>
            <SquareButton><Octicon name="issue" /></SquareButton>
            <SquareButton><Octicon name="pull" /></SquareButton>
            <SquareButton><Octicon name="inbox" /></SquareButton>
            <Identicon size={32} />
          </Actions>
        </TopBar>
        <RepoNav>
          {navItems.map((n, i) => (
            <NavItem key={n.label} $active={i === 0}>
              <Octicon name={n.icon} />
              <NavLabel $w={n.w}>{n.label}</NavLabel>
            </NavItem>
          ))}
        </RepoNav>
      </Header>
      <Main>
        <PathLine><PathLink>aitstudent</PathLink>/</PathLine>
        <DropZone>
          <Svg $size={32} viewBox="0 0 24 24" fill="none" stroke="#7d8590" strokeWidth="1.5" strokeLinejoin="round">
            <path d="M5 1.750h10.100c.3 0 .6.120.800.330l4.020 4.020c.2.200.330.500.330.800V21c0 .700-.550 1.250-1.250 1.250H5c-.700 0-1.250-.550-1.250-1.250V3c0-.700.550-1.250 1.250-1.250z" />
            <path d="M14.750 2v5c0 .550.450 1 1 1H20" />
          </Svg>
          <DropTitle>Drag files here to add them to your repository</DropTitle>
          <DropHint>Or <HintLink>choose your files</HintLink></DropHint>
        </DropZone>
        <CommitRow>
          <Identicon size={48} />
          <CommitColumn>
            <CommitBox>
              <Caret viewBox="0 0 8 16"><path d="M8 1L1 8l7 7" fill="#0d1117" stroke="#30363d" /></Caret>
              <CommitTitle>Commit changes</CommitTitle>
              <TextField placeholder="Add files via upload" />
              <TextArea placeholder="Add an optional extended description..." />
            </CommitBox>
            <ButtonRow>
              <Button $primary>Commit changes</Button>
              <Button>Cancel</Button>
            </ButtonRow>
          </CommitColumn>
        </CommitRow>
        <Footer>
          <Octicon name="mark" size={24} color="#6e7681" />
          <Copyright>© 2023 GitHub, Inc.</Copyright>
          {footerLinks.map(([label, w]) => <FooterLink key={label} $w={w}>{label}</FooterLink>)}
        </Footer>
      </Main>
      <WindowShadow />
      <ExplorerWindow />
    </Page>
  );
}
